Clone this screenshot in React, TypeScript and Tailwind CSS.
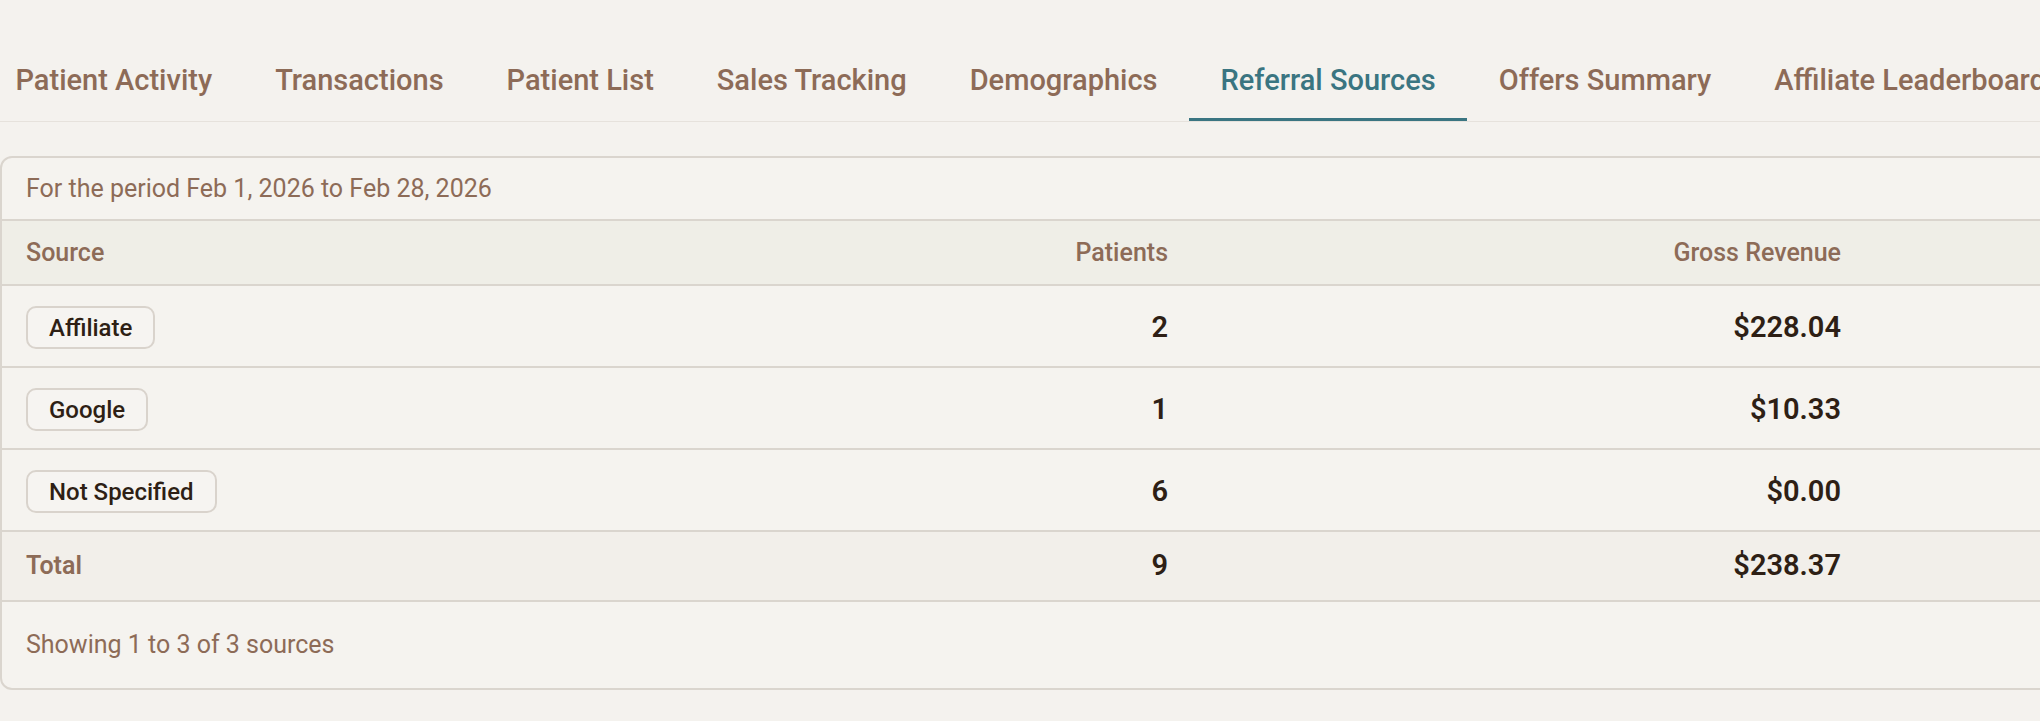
import { useState } from 'react';

interface SourceRow {
  source: string;
  patients: number;
  revenue: string;
}

const tabs = [
  'Patient Activity',
  'Transactions',
  'Patient List',
  'Sales Tracking',
  'Demographics',
  'Referral Sources',
  'Offers Summary',
  'Affiliate Leaderboard',
];

const rows: SourceRow[] = [
  { source: 'Affiliate', patients: 2, revenue: '$228.04' },
  { source: 'Google', patients: 1, revenue: '$10.33' },
  { source: 'Not Specified', patients: 6, revenue: '$0.00' },
];

export default function App() {
  const [active, setActive] = useState('Referral Sources');

  return (
    <div className="min-h-screen w-full overflow-hidden bg-[#f4f2ee] font-['Roboto',sans-serif] pt-[37px]">
      <div className="border-b border-[#e6e2dc]">
        <div className="flex -ml-4 whitespace-nowrap">
          {tabs.map((tab) => (
            <button
              key={tab}
              onClick={() => setActive(tab)}
              className={`h-[84px] pt-[6px] px-[31.5px] shrink-0 flex items-center text-[29px] font-medium border-b-[3px] ${
                active === tab
                  ? 'text-[#3a7581] border-[#3a7581]'
                  : 'text-[#8d6b57] border-transparent'
              }`}
            >
              {tab}
            </button>
          ))}
        </div>
      </div>

      <div className="mt-[34px] w-[2300px] rounded-[12px] border-2 border-[#dad5ce] bg-[#f5f3ef] overflow-hidden">
        <div className="h-[63px] px-6 flex items-center border-b-2 border-[#dad5ce] text-[25px] text-[#8d6b57]">
          For the period Feb 1, 2026 to Feb 28, 2026
        </div>

        <div className="grid grid-cols-[890px_300px_673px_1fr] h-[65px] items-center bg-[#efeee7] border-b-2 border-[#dad5ce] text-[25px] font-medium text-[#8d6b57]">
          <div className="px-6">Source</div>
          <div className="px-6 text-right">Patients</div>
          <div className="px-6 text-right">Gross Revenue</div>
          <div />
        </div>

        {rows.map((row) => (
          <div
            key={row.source}
            className="grid grid-cols-[890px_300px_673px_1fr] h-[82px] items-center border-b-2 border-[#dad5ce]"
          >
            <div className="px-6 pt-[3px]">
              <span className="inline-flex items-center h-[43px] px-[21px] rounded-[10px] border-2 border-[#d9d3cc] bg-[#f6f4f1] text-[24px] font-medium text-[#2e1f15]">
                {row.source}
              </span>
            </div>
            <div className="px-6 pt-[3px] text-right text-[29px] font-semibold text-[#2e1f15]">{row.patients}</div>
            <div className="px-6 pt-[3px] text-right text-[29px] font-semibold text-[#2e1f15]">{row.revenue}</div>
            <div />
          </div>
        ))}

        <div className="grid grid-cols-[890px_300px_673px_1fr] h-[70px] items-center bg-[#f2efea] border-b-2 border-[#dad5ce]">
          <div className="px-6 text-[25px] font-semibold text-[#8d6b57]">Total</div>
          <div className="px-6 text-right text-[29px] font-semibold text-[#2e1f15]">9</div>
          <div className="px-6 text-right text-[29px] font-semibold text-[#2e1f15]">$238.37</div>
          <div />
        </div>

        <div className="h-[86px] px-6 flex items-center text-[25px] text-[#8d6b57]">
          Showing 1 to 3 of 3 sources
        </div>
      </div>
    </div>
  );
}
